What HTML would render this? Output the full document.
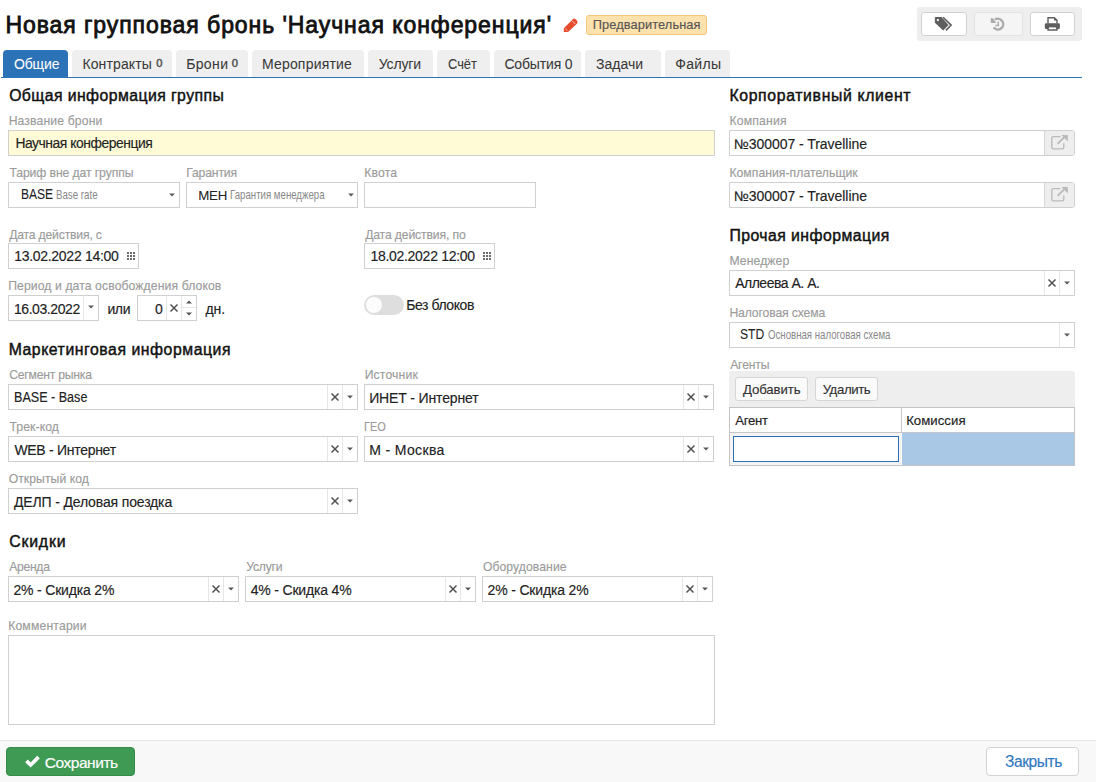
<!DOCTYPE html>
<html><head><meta charset="utf-8"><title>Групповая бронь</title>
<style>
html,body{margin:0;padding:0;background:#fff;width:1096px;height:782px;overflow:hidden;position:relative}
body{font-family:"Liberation Sans",sans-serif}
.t{position:absolute;white-space:nowrap}
.b{position:absolute;box-sizing:border-box}
</style></head><body>
<div class="t" style="left:5.40px;top:13.53px;font-size:23px;line-height:23px;color:#111;letter-spacing:0.932px;-webkit-text-stroke:0.8px #111;">Новая групповая бронь &#39;Научная конференция&#39;</div>
<svg class="b" style="left:558px;top:14px" width="26" height="22" viewBox="0 0 26 22"><path d="M5.8 18.1 V14.2 L14.6 5.4 Q16.2 3.8 17.8 5.4 L18.9 6.5 Q20.5 8.1 18.9 9.7 L10.1 18.1 Z" fill="#e64b30"/><path d="M14.1 6.8 L17.4 10.1" stroke="#fff" stroke-width="0.8" opacity="0.85"/><path d="M7.4 14.8 L9.3 16.7" stroke="#fff" stroke-width="0.9" opacity="0.8"/></svg>
<div class="b" style="left:586px;top:15px;width:121px;height:20px;background:#fde2ad;border:1px solid #f4c679;border-radius:3px"></div>
<div class="t" style="left:592.80px;top:18.76px;font-size:12.8px;line-height:12.8px;color:#555;letter-spacing:0.100px;-webkit-text-stroke:0.15px #555;">Предварительная</div>
<div class="b" style="left:917px;top:7px;width:165px;height:34px;background:#eeeeee;border-radius:3px"></div>
<div class="b" style="left:921px;top:12px;width:46px;height:23.5px;background:#fff;border:1px solid #d2d2d2;border-radius:3px"></div>
<div class="b" style="left:973.5px;top:12px;width:49.5px;height:23.5px;background:#f5f5f5;border:1px solid #e2e2e2;border-radius:3px"></div>
<div class="b" style="left:1029.5px;top:12px;width:45.5px;height:23.5px;background:#fff;border:1px solid #d2d2d2;border-radius:3px"></div>
<svg class="b" style="left:930px;top:14px" width="30" height="20" viewBox="0 0 30 20"><path d="M4.9 3.9 Q4.9 3 5.8 3 H11.6 L18.5 11.1 L13.2 16.6 L4.9 8.8 Z" fill="#5e5e5e"/><circle cx="7.9" cy="6.1" r="1.15" fill="#fff"/><path d="M13.1 3.3 L21.1 11.1 L15.9 16.4" fill="none" stroke="#5e5e5e" stroke-width="1.6"/></svg>
<svg class="b" style="left:985px;top:14px" width="30" height="20" viewBox="0 0 30 20"><path d="M9.9 5.6 A5.4 5.4 0 1 1 8.6 13.6" fill="none" stroke="#ababab" stroke-width="2.4"/><path d="M5.8 3.9 L8.4 4.6 L11.2 9 H5.8 Z" fill="#ababab"/><path d="M13.3 7.4 V11.4 H10.4" fill="none" stroke="#ababab" stroke-width="1.5"/></svg>
<svg class="b" style="left:1038px;top:14px" width="30" height="20" viewBox="0 0 30 20"><path d="M10 9.6 V3.7 H16.2 L19 6.4 V9.6" fill="none" stroke="#5e5e5e" stroke-width="1.4"/><path d="M16 3.2 V6.6 H19.4" fill="#5e5e5e"/><rect x="6.8" y="9.3" width="15.1" height="5.6" rx="1.2" fill="#5e5e5e"/><rect x="10.7" y="13.4" width="7.6" height="2" fill="#fff"/><path d="M10 12.8 V16 H19 V12.8" fill="none" stroke="#5e5e5e" stroke-width="1.4"/></svg>
<div class="b" style="left:3px;top:50px;width:64.5px;height:27px;background:#2c72b6;border-radius:4px 4px 0 0"></div>
<div class="t" style="left:13.90px;top:56.95px;font-size:14.0px;line-height:14.0px;color:#fff;letter-spacing:-0.125px;-webkit-text-stroke:0.05px #fff;">Общие</div>
<div class="b" style="left:72px;top:50px;width:99.5px;height:27px;background:#efefef;border-radius:4px 4px 0 0"></div>
<div class="t" style="left:82.40px;top:56.95px;font-size:14.0px;line-height:14.0px;color:#383838;letter-spacing:0.125px;-webkit-text-stroke:0.05px #383838;">Контракты</div>
<div class="t" style="left:156.15px;top:57.72px;font-size:11.2px;line-height:11.2px;color:#555;-webkit-text-stroke:0.5px #555;">0</div>
<div class="b" style="left:176px;top:50px;width:71.5px;height:27px;background:#efefef;border-radius:4px 4px 0 0"></div>
<div class="t" style="left:186.15px;top:56.95px;font-size:14.0px;line-height:14.0px;color:#383838;letter-spacing:0.375px;-webkit-text-stroke:0.05px #383838;">Брони</div>
<div class="t" style="left:231.65px;top:57.72px;font-size:11.2px;line-height:11.2px;color:#555;-webkit-text-stroke:0.5px #555;">0</div>
<div class="b" style="left:252px;top:50px;width:111.75px;height:27px;background:#efefef;border-radius:4px 4px 0 0"></div>
<div class="t" style="left:261.90px;top:56.95px;font-size:14.0px;line-height:14.0px;color:#383838;letter-spacing:0.200px;-webkit-text-stroke:0.05px #383838;">Мероприятие</div>
<div class="b" style="left:368.25px;top:50px;width:64.25px;height:27px;background:#efefef;border-radius:4px 4px 0 0"></div>
<div class="t" style="left:378.65px;top:56.95px;font-size:14.0px;line-height:14.0px;color:#383838;letter-spacing:-0.100px;-webkit-text-stroke:0.05px #383838;">Услуги</div>
<div class="b" style="left:437px;top:50px;width:52.5px;height:27px;background:#efefef;border-radius:4px 4px 0 0"></div>
<div class="t" style="left:447.71px;top:56.95px;font-size:14.0px;line-height:14.0px;color:#383838;transform:scaleX(0.9180);transform-origin:0 0;-webkit-text-stroke:0.05px #383838;">Счёт</div>
<div class="b" style="left:494.25px;top:50px;width:86.5px;height:27px;background:#efefef;border-radius:4px 4px 0 0"></div>
<div class="t" style="left:504.40px;top:56.95px;font-size:14.0px;line-height:14.0px;color:#383838;letter-spacing:-0.156px;-webkit-text-stroke:0.05px #383838;">События 0</div>
<div class="b" style="left:585px;top:50px;width:75.75px;height:27px;background:#efefef;border-radius:4px 4px 0 0"></div>
<div class="t" style="left:595.90px;top:56.95px;font-size:14.0px;line-height:14.0px;color:#383838;letter-spacing:0.050px;-webkit-text-stroke:0.05px #383838;">Задачи</div>
<div class="b" style="left:665px;top:50px;width:65px;height:27px;background:#efefef;border-radius:4px 4px 0 0"></div>
<div class="t" style="left:675.15px;top:56.95px;font-size:14.0px;line-height:14.0px;color:#383838;letter-spacing:0.375px;-webkit-text-stroke:0.05px #383838;">Файлы</div>
<div class="b" style="left:1px;top:77px;width:1081px;height:1px;background:#2c72b6"></div>
<div class="t" style="left:9.15px;top:87.87px;font-size:15.8px;line-height:15.8px;color:#111;letter-spacing:0.420px;-webkit-text-stroke:0.45px #111;">Общая информация группы</div>
<div class="t" style="left:8.65px;top:115.17px;font-size:12.2px;line-height:12.2px;color:#9b9b9b;letter-spacing:0.135px;-webkit-text-stroke:0.15px #9b9b9b;">Название брони</div>
<div class="b" style="left:8px;top:130px;width:707px;height:26px;border:1px solid #d0d0d0;background:#fefbd6"></div>
<div class="t" style="left:15.41px;top:136.74px;font-size:13.89px;line-height:13.89px;color:#222;letter-spacing:-0.450px;-webkit-text-stroke:0.15px #222;">Научная конференция</div>
<div class="t" style="left:9.40px;top:166.97px;font-size:12.2px;line-height:12.2px;color:#9b9b9b;letter-spacing:-0.092px;-webkit-text-stroke:0.15px #9b9b9b;">Тариф вне дат группы</div>
<div class="b" style="left:8px;top:182px;width:172px;height:26px;border:1px solid #d0d0d0;background:#fff"></div>
<div class="t" style="left:20.53px;top:188.32px;font-size:13.8px;line-height:13.8px;color:#222;transform:scaleX(0.8723);transform-origin:0 0;-webkit-text-stroke:0.05px #222;">BASE</div>
<div class="t" style="left:55.63px;top:188.63px;font-size:12.6px;line-height:12.6px;color:#888;transform:scaleX(0.7703);transform-origin:0 0;">Base rate</div>
<svg class="b" style="left:168px;top:192px" width="8" height="6" viewBox="0 0 8 6"><path d="M1.1 1.4H6.9L4 4.4Z" fill="#585858"/></svg>
<div class="t" style="left:186.15px;top:166.97px;font-size:12.2px;line-height:12.2px;color:#9b9b9b;letter-spacing:-0.143px;-webkit-text-stroke:0.15px #9b9b9b;">Гарантия</div>
<div class="b" style="left:186px;top:182px;width:172px;height:26px;border:1px solid #d0d0d0;background:#fff"></div>
<div class="t" style="left:198.15px;top:188.74px;font-size:13.3px;line-height:13.3px;color:#222;letter-spacing:-0.125px;-webkit-text-stroke:0.05px #222;">МЕН</div>
<div class="t" style="left:230.13px;top:188.63px;font-size:12.6px;line-height:12.6px;color:#888;transform:scaleX(0.7669);transform-origin:0 0;">Гарантия менеджера</div>
<svg class="b" style="left:346.5px;top:192px" width="8" height="6" viewBox="0 0 8 6"><path d="M1.1 1.4H6.9L4 4.4Z" fill="#585858"/></svg>
<div class="t" style="left:364.15px;top:166.97px;font-size:12.2px;line-height:12.2px;color:#9b9b9b;letter-spacing:0.188px;-webkit-text-stroke:0.15px #9b9b9b;">Квота</div>
<div class="b" style="left:364px;top:182px;width:172px;height:26px;border:1px solid #d0d0d0;background:#fff"></div>
<div class="t" style="left:9.15px;top:228.77px;font-size:12.2px;line-height:12.2px;color:#9b9b9b;letter-spacing:-0.183px;-webkit-text-stroke:0.15px #9b9b9b;">Дата действия, с</div>
<div class="b" style="left:8px;top:243px;width:131px;height:26px;border:1px solid #d0d0d0;background:#fff"></div>
<div class="t" style="left:14.15px;top:249.05px;font-size:14.0px;line-height:14.0px;color:#222;letter-spacing:-0.283px;-webkit-text-stroke:0.15px #222;">13.02.2022 14:00</div>
<svg class="b" style="left:127px;top:251.6px" width="8" height="8" viewBox="0 0 8 8" fill="#6a6a6a"><rect x="0" y="0" width="2" height="2"/><rect x="0" y="3" width="2" height="2"/><rect x="0" y="6" width="2" height="2"/><rect x="3" y="0" width="2" height="2"/><rect x="3" y="3" width="2" height="2"/><rect x="3" y="6" width="2" height="2"/><rect x="6" y="0" width="2" height="2"/><rect x="6" y="3" width="2" height="2"/><rect x="6" y="6" width="2" height="2"/></svg>
<div class="t" style="left:365.15px;top:228.77px;font-size:12.2px;line-height:12.2px;color:#9b9b9b;letter-spacing:-0.141px;-webkit-text-stroke:0.15px #9b9b9b;">Дата действия, по</div>
<div class="b" style="left:364px;top:243px;width:131px;height:26px;border:1px solid #d0d0d0;background:#fff"></div>
<div class="t" style="left:370.40px;top:249.05px;font-size:14.0px;line-height:14.0px;color:#222;letter-spacing:-0.283px;-webkit-text-stroke:0.15px #222;">18.02.2022 12:00</div>
<svg class="b" style="left:483px;top:251.6px" width="8" height="8" viewBox="0 0 8 8" fill="#6a6a6a"><rect x="0" y="0" width="2" height="2"/><rect x="0" y="3" width="2" height="2"/><rect x="0" y="6" width="2" height="2"/><rect x="3" y="0" width="2" height="2"/><rect x="3" y="3" width="2" height="2"/><rect x="3" y="6" width="2" height="2"/><rect x="6" y="0" width="2" height="2"/><rect x="6" y="3" width="2" height="2"/><rect x="6" y="6" width="2" height="2"/></svg>
<div class="t" style="left:8.15px;top:280.17px;font-size:12.2px;line-height:12.2px;color:#9b9b9b;letter-spacing:0.102px;-webkit-text-stroke:0.15px #9b9b9b;">Период и дата освобождения блоков</div>
<div class="b" style="left:8px;top:295px;width:91px;height:26px;border:1px solid #d0d0d0;background:#fff"></div>
<div class="t" style="left:13.90px;top:302.15px;font-size:14.0px;line-height:14.0px;color:#222;letter-spacing:-0.417px;-webkit-text-stroke:0.15px #222;">16.03.2022</div>
<div class="b" style="left:83px;top:296px;width:1px;height:24px;background:#e6e6e6"></div>
<svg class="b" style="left:86.6px;top:304px" width="8" height="6" viewBox="0 0 8 6"><path d="M1.1 1.4H6.9L4 4.4Z" fill="#585858"/></svg>
<div class="t" style="left:107.40px;top:302.15px;font-size:14.0px;line-height:14.0px;color:#222;letter-spacing:-0.375px;-webkit-text-stroke:0.15px #222;">или</div>
<div class="b" style="left:137px;top:295px;width:60px;height:26px;border:1px solid #d0d0d0;background:#fff"></div>
<div class="t" style="left:154.90px;top:302.15px;font-size:14.0px;line-height:14.0px;color:#222;-webkit-text-stroke:0.15px #222;">0</div>
<div class="b" style="left:166px;top:296px;width:1px;height:24px;background:#e6e6e6"></div>
<svg class="b" style="left:169px;top:303px" width="10" height="10" viewBox="0 0 10 10"><path d="M1.5 1.5L8.5 8.5M8.5 1.5L1.5 8.5" stroke="#505050" stroke-width="1.45"/></svg>
<div class="b" style="left:181px;top:296px;width:1px;height:24px;background:#e6e6e6"></div>
<div class="b" style="left:182px;top:307px;width:14px;height:1px;background:#e6e6e6"></div>
<svg class="b" style="left:185px;top:299px" width="8" height="18" viewBox="0 0 8 18"><path d="M1 4.5H7L4 1.5Z M1 13.5H7L4 16.5Z" fill="#555"/></svg>
<div class="t" style="left:205.40px;top:302.15px;font-size:14.0px;line-height:14.0px;color:#222;-webkit-text-stroke:0.15px #222;">дн.</div>
<div class="b" style="left:364px;top:295px;width:40px;height:20px;background:#dedede;border-radius:10px"></div>
<div class="b" style="left:366px;top:297px;width:16px;height:16px;background:#fcfcfc;border-radius:50%"></div>
<div class="t" style="left:406.15px;top:298.15px;font-size:14.0px;line-height:14.0px;color:#222;letter-spacing:-0.417px;-webkit-text-stroke:0.15px #222;">Без блоков</div>
<div class="t" style="left:8.65px;top:341.62px;font-size:15.8px;line-height:15.8px;color:#111;letter-spacing:0.543px;-webkit-text-stroke:0.45px #111;">Маркетинговая информация</div>
<div class="t" style="left:9.15px;top:368.97px;font-size:12.2px;line-height:12.2px;color:#9b9b9b;letter-spacing:-0.229px;-webkit-text-stroke:0.15px #9b9b9b;">Сегмент рынка</div>
<div class="b" style="left:8px;top:384px;width:350px;height:26px;border:1px solid #d0d0d0;background:#fff"></div>
<div class="b" style="left:342px;top:385px;width:1px;height:24px;background:#e6e6e6"></div>
<svg class="b" style="left:346px;top:394px" width="8" height="6" viewBox="0 0 8 6"><path d="M1.1 1.4H6.9L4 4.4Z" fill="#585858"/></svg>
<div class="b" style="left:327px;top:385px;width:1px;height:24px;background:#e6e6e6"></div>
<svg class="b" style="left:330px;top:392.2px" width="10" height="10" viewBox="0 0 10 10"><path d="M1.5 1.5L8.5 8.5M8.5 1.5L1.5 8.5" stroke="#505050" stroke-width="1.45"/></svg>
<div class="t" style="left:13.74px;top:391.32px;font-size:13.8px;line-height:13.8px;color:#222;transform:scaleX(0.9114);transform-origin:0 0;-webkit-text-stroke:0.15px #222;">BASE - Base</div>
<div class="t" style="left:364.65px;top:368.97px;font-size:12.2px;line-height:12.2px;color:#9b9b9b;letter-spacing:0.164px;-webkit-text-stroke:0.15px #9b9b9b;">Источник</div>
<div class="b" style="left:364px;top:384px;width:350px;height:26px;border:1px solid #d0d0d0;background:#fff"></div>
<div class="b" style="left:698px;top:385px;width:1px;height:24px;background:#e6e6e6"></div>
<svg class="b" style="left:702px;top:394px" width="8" height="6" viewBox="0 0 8 6"><path d="M1.1 1.4H6.9L4 4.4Z" fill="#585858"/></svg>
<div class="b" style="left:683px;top:385px;width:1px;height:24px;background:#e6e6e6"></div>
<svg class="b" style="left:686px;top:392.2px" width="10" height="10" viewBox="0 0 10 10"><path d="M1.5 1.5L8.5 8.5M8.5 1.5L1.5 8.5" stroke="#505050" stroke-width="1.45"/></svg>
<div class="t" style="left:369.15px;top:391.15px;font-size:14.0px;line-height:14.0px;color:#222;letter-spacing:-0.146px;-webkit-text-stroke:0.15px #222;">ИНЕТ - Интернет</div>
<div class="t" style="left:9.40px;top:421.17px;font-size:12.2px;line-height:12.2px;color:#9b9b9b;letter-spacing:0.107px;-webkit-text-stroke:0.15px #9b9b9b;">Трек-код</div>
<div class="b" style="left:8px;top:436px;width:350px;height:26px;border:1px solid #d0d0d0;background:#fff"></div>
<div class="b" style="left:342px;top:437px;width:1px;height:24px;background:#e6e6e6"></div>
<svg class="b" style="left:346px;top:446px" width="8" height="6" viewBox="0 0 8 6"><path d="M1.1 1.4H6.9L4 4.4Z" fill="#585858"/></svg>
<div class="b" style="left:327px;top:437px;width:1px;height:24px;background:#e6e6e6"></div>
<svg class="b" style="left:330px;top:444.2px" width="10" height="10" viewBox="0 0 10 10"><path d="M1.5 1.5L8.5 8.5M8.5 1.5L1.5 8.5" stroke="#505050" stroke-width="1.45"/></svg>
<div class="t" style="left:14.40px;top:443.15px;font-size:14.0px;line-height:14.0px;color:#222;letter-spacing:-0.288px;-webkit-text-stroke:0.15px #222;">WEB - Интернет</div>
<div class="t" style="left:364.19px;top:421.17px;font-size:12.2px;line-height:12.2px;color:#9b9b9b;transform:scaleX(0.9055);transform-origin:0 0;-webkit-text-stroke:0.15px #9b9b9b;">ГЕО</div>
<div class="b" style="left:364px;top:436px;width:350px;height:26px;border:1px solid #d0d0d0;background:#fff"></div>
<div class="b" style="left:698px;top:437px;width:1px;height:24px;background:#e6e6e6"></div>
<svg class="b" style="left:702px;top:446px" width="8" height="6" viewBox="0 0 8 6"><path d="M1.1 1.4H6.9L4 4.4Z" fill="#585858"/></svg>
<div class="b" style="left:683px;top:437px;width:1px;height:24px;background:#e6e6e6"></div>
<svg class="b" style="left:686px;top:444.2px" width="10" height="10" viewBox="0 0 10 10"><path d="M1.5 1.5L8.5 8.5M8.5 1.5L1.5 8.5" stroke="#505050" stroke-width="1.45"/></svg>
<div class="t" style="left:369.15px;top:443.15px;font-size:14.0px;line-height:14.0px;color:#222;letter-spacing:0.372px;-webkit-text-stroke:0.15px #222;">М - Москва</div>
<div class="t" style="left:8.65px;top:473.17px;font-size:12.2px;line-height:12.2px;color:#9b9b9b;letter-spacing:0.068px;-webkit-text-stroke:0.15px #9b9b9b;">Открытый код</div>
<div class="b" style="left:8px;top:488px;width:350px;height:26px;border:1px solid #d0d0d0;background:#fff"></div>
<div class="b" style="left:342px;top:489px;width:1px;height:24px;background:#e6e6e6"></div>
<svg class="b" style="left:346px;top:498px" width="8" height="6" viewBox="0 0 8 6"><path d="M1.1 1.4H6.9L4 4.4Z" fill="#585858"/></svg>
<div class="b" style="left:327px;top:489px;width:1px;height:24px;background:#e6e6e6"></div>
<svg class="b" style="left:330px;top:496.2px" width="10" height="10" viewBox="0 0 10 10"><path d="M1.5 1.5L8.5 8.5M8.5 1.5L1.5 8.5" stroke="#505050" stroke-width="1.45"/></svg>
<div class="t" style="left:13.90px;top:495.15px;font-size:14.0px;line-height:14.0px;color:#222;letter-spacing:-0.143px;-webkit-text-stroke:0.15px #222;">ДЕЛП - Деловая поездка</div>
<div class="t" style="left:9.15px;top:534.12px;font-size:15.8px;line-height:15.8px;color:#111;letter-spacing:0.850px;-webkit-text-stroke:0.45px #111;">Скидки</div>
<div class="t" style="left:9.15px;top:560.67px;font-size:12.2px;line-height:12.2px;color:#9b9b9b;letter-spacing:-0.300px;-webkit-text-stroke:0.15px #9b9b9b;">Аренда</div>
<div class="b" style="left:8px;top:576px;width:231px;height:26px;border:1px solid #d0d0d0;background:#fff"></div>
<div class="b" style="left:223px;top:577px;width:1px;height:24px;background:#e6e6e6"></div>
<svg class="b" style="left:227px;top:586px" width="8" height="6" viewBox="0 0 8 6"><path d="M1.1 1.4H6.9L4 4.4Z" fill="#585858"/></svg>
<div class="b" style="left:208px;top:577px;width:1px;height:24px;background:#e6e6e6"></div>
<svg class="b" style="left:211px;top:584.2px" width="10" height="10" viewBox="0 0 10 10"><path d="M1.5 1.5L8.5 8.5M8.5 1.5L1.5 8.5" stroke="#505050" stroke-width="1.45"/></svg>
<div class="t" style="left:13.40px;top:583.15px;font-size:14.0px;line-height:14.0px;color:#222;letter-spacing:-0.173px;-webkit-text-stroke:0.15px #222;">2% - Скидка 2%</div>
<div class="t" style="left:246.25px;top:560.67px;font-size:12.2px;line-height:12.2px;color:#9b9b9b;letter-spacing:-0.220px;-webkit-text-stroke:0.15px #9b9b9b;">Услуги</div>
<div class="b" style="left:245px;top:576px;width:231px;height:26px;border:1px solid #d0d0d0;background:#fff"></div>
<div class="b" style="left:460px;top:577px;width:1px;height:24px;background:#e6e6e6"></div>
<svg class="b" style="left:464px;top:586px" width="8" height="6" viewBox="0 0 8 6"><path d="M1.1 1.4H6.9L4 4.4Z" fill="#585858"/></svg>
<div class="b" style="left:445px;top:577px;width:1px;height:24px;background:#e6e6e6"></div>
<svg class="b" style="left:448px;top:584.2px" width="10" height="10" viewBox="0 0 10 10"><path d="M1.5 1.5L8.5 8.5M8.5 1.5L1.5 8.5" stroke="#505050" stroke-width="1.45"/></svg>
<div class="t" style="left:250.65px;top:583.15px;font-size:14.0px;line-height:14.0px;color:#222;letter-spacing:-0.169px;-webkit-text-stroke:0.15px #222;">4% - Скидка 4%</div>
<div class="t" style="left:482.90px;top:560.67px;font-size:12.2px;line-height:12.2px;color:#9b9b9b;letter-spacing:0.073px;-webkit-text-stroke:0.15px #9b9b9b;">Оборудование</div>
<div class="b" style="left:482px;top:576px;width:231px;height:26px;border:1px solid #d0d0d0;background:#fff"></div>
<div class="b" style="left:697px;top:577px;width:1px;height:24px;background:#e6e6e6"></div>
<svg class="b" style="left:701px;top:586px" width="8" height="6" viewBox="0 0 8 6"><path d="M1.1 1.4H6.9L4 4.4Z" fill="#585858"/></svg>
<div class="b" style="left:682px;top:577px;width:1px;height:24px;background:#e6e6e6"></div>
<svg class="b" style="left:685px;top:584.2px" width="10" height="10" viewBox="0 0 10 10"><path d="M1.5 1.5L8.5 8.5M8.5 1.5L1.5 8.5" stroke="#505050" stroke-width="1.45"/></svg>
<div class="t" style="left:487.60px;top:583.15px;font-size:14.0px;line-height:14.0px;color:#222;letter-spacing:-0.173px;-webkit-text-stroke:0.15px #222;">2% - Скидка 2%</div>
<div class="t" style="left:8.15px;top:619.67px;font-size:12.2px;line-height:12.2px;color:#9b9b9b;letter-spacing:0.175px;-webkit-text-stroke:0.15px #9b9b9b;">Комментарии</div>
<div class="b" style="left:8px;top:635px;width:707px;height:90px;border:1px solid #d0d0d0;background:#fff"></div>
<div class="t" style="left:729.40px;top:87.87px;font-size:15.8px;line-height:15.8px;color:#111;letter-spacing:0.645px;-webkit-text-stroke:0.45px #111;">Корпоративный клиент</div>
<div class="t" style="left:729.40px;top:115.17px;font-size:12.2px;line-height:12.2px;color:#9b9b9b;letter-spacing:0.214px;-webkit-text-stroke:0.15px #9b9b9b;">Компания</div>
<div class="b" style="left:729px;top:130px;width:346px;height:26px;border:1px solid #d0d0d0;background:#fff;border-radius:0 3px 3px 0"></div>
<div class="b" style="left:1044px;top:131px;width:30px;height:24px;background:#eeeeee;border-left:1px solid #d6d6d6;border-radius:0 2px 2px 0"></div>
<div class="t" style="left:733.90px;top:137.15px;font-size:14.0px;line-height:14.0px;color:#222;letter-spacing:-0.053px;-webkit-text-stroke:0.15px #222;">№300007 - Travelline</div>
<svg class="b" style="left:1040px;top:125px" width="40" height="35" viewBox="0 0 40 35"><path d="M20.4 11.6 H13.3 Q11.8 11.6 11.8 13.1 V22.3 Q11.8 23.8 13.3 23.8 H22.3 Q23.8 23.8 23.8 22.3 V18.3" fill="none" stroke="#bababa" stroke-width="1.35"/><path d="M17.6 18.9 L24.6 11.9" stroke="#bababa" stroke-width="1.8"/><path d="M21.4 10 H27.8 V16.4 Z" fill="#bababa"/></svg>
<div class="t" style="left:729.40px;top:166.97px;font-size:12.2px;line-height:12.2px;color:#9b9b9b;letter-spacing:0.042px;-webkit-text-stroke:0.15px #9b9b9b;">Компания-плательщик</div>
<div class="b" style="left:729px;top:182px;width:346px;height:26px;border:1px solid #d0d0d0;background:#fff;border-radius:0 3px 3px 0"></div>
<div class="b" style="left:1044px;top:183px;width:30px;height:24px;background:#eeeeee;border-left:1px solid #d6d6d6;border-radius:0 2px 2px 0"></div>
<div class="t" style="left:733.90px;top:189.15px;font-size:14.0px;line-height:14.0px;color:#222;letter-spacing:-0.053px;-webkit-text-stroke:0.15px #222;">№300007 - Travelline</div>
<svg class="b" style="left:1040px;top:177px" width="40" height="35" viewBox="0 0 40 35"><path d="M20.4 11.6 H13.3 Q11.8 11.6 11.8 13.1 V22.3 Q11.8 23.8 13.3 23.8 H22.3 Q23.8 23.8 23.8 22.3 V18.3" fill="none" stroke="#bababa" stroke-width="1.35"/><path d="M17.6 18.9 L24.6 11.9" stroke="#bababa" stroke-width="1.8"/><path d="M21.4 10 H27.8 V16.4 Z" fill="#bababa"/></svg>
<div class="t" style="left:729.40px;top:227.87px;font-size:15.8px;line-height:15.8px;color:#111;letter-spacing:0.453px;-webkit-text-stroke:0.45px #111;">Прочая информация</div>
<div class="t" style="left:729.40px;top:255.17px;font-size:12.2px;line-height:12.2px;color:#9b9b9b;letter-spacing:0.107px;-webkit-text-stroke:0.15px #9b9b9b;">Менеджер</div>
<div class="b" style="left:729px;top:270px;width:346px;height:26px;border:1px solid #d0d0d0;background:#fff"></div>
<div class="b" style="left:1059px;top:271px;width:1px;height:24px;background:#e6e6e6"></div>
<svg class="b" style="left:1063px;top:280px" width="8" height="6" viewBox="0 0 8 6"><path d="M1.1 1.4H6.9L4 4.4Z" fill="#585858"/></svg>
<div class="b" style="left:1044px;top:271px;width:1px;height:24px;background:#e6e6e6"></div>
<svg class="b" style="left:1047px;top:278.2px" width="10" height="10" viewBox="0 0 10 10"><path d="M1.5 1.5L8.5 8.5M8.5 1.5L1.5 8.5" stroke="#505050" stroke-width="1.45"/></svg>
<div class="t" style="left:735.15px;top:277.49px;font-size:13.95px;line-height:13.95px;color:#222;letter-spacing:-0.450px;-webkit-text-stroke:0.15px #222;">Аллеева А. А.</div>
<div class="t" style="left:729.40px;top:307.17px;font-size:12.2px;line-height:12.2px;color:#9b9b9b;letter-spacing:-0.125px;-webkit-text-stroke:0.15px #9b9b9b;">Налоговая схема</div>
<div class="b" style="left:729px;top:322px;width:346px;height:26px;border:1px solid #d0d0d0;background:#fff"></div>
<div class="b" style="left:1059px;top:323px;width:1px;height:24px;background:#e6e6e6"></div>
<svg class="b" style="left:1063px;top:332px" width="8" height="6" viewBox="0 0 8 6"><path d="M1.1 1.4H6.9L4 4.4Z" fill="#585858"/></svg>
<div class="t" style="left:739.71px;top:328.32px;font-size:13.8px;line-height:13.8px;color:#222;transform:scaleX(0.8774);transform-origin:0 0;-webkit-text-stroke:0.05px #222;">STD</div>
<div class="t" style="left:768.02px;top:328.63px;font-size:12.6px;line-height:12.6px;color:#888;transform:scaleX(0.7661);transform-origin:0 0;">Основная налоговая схема</div>
<div class="t" style="left:730.15px;top:358.87px;font-size:12.2px;line-height:12.2px;color:#9b9b9b;letter-spacing:-0.150px;-webkit-text-stroke:0.15px #9b9b9b;">Агенты</div>
<div class="b" style="left:729px;top:371px;width:346px;height:36px;background:#eeeeee;border-radius:3px 3px 0 0"></div>
<div class="b" style="left:734.5px;top:376.75px;width:73.0px;height:24.5px;background:#fafafa;border:1px solid #d6d6d6;border-radius:3px"></div>
<div class="t" style="left:742.90px;top:382.82px;font-size:13.2px;line-height:13.2px;color:#333;letter-spacing:-0.071px;-webkit-text-stroke:0.15px #333;">Добавить</div>
<div class="b" style="left:814.5px;top:376.75px;width:63.0px;height:24.5px;background:#fafafa;border:1px solid #d6d6d6;border-radius:3px"></div>
<div class="t" style="left:822.65px;top:382.82px;font-size:13.2px;line-height:13.2px;color:#333;letter-spacing:-0.375px;-webkit-text-stroke:0.15px #333;">Удалить</div>
<div class="b" style="left:729px;top:407px;width:346px;height:59px;border:1px solid #c4c4c4;background:#fff"></div>
<div class="b" style="left:730px;top:432px;width:344px;height:1px;background:#c8c8c8"></div>
<div class="b" style="left:901px;top:408px;width:1px;height:24px;background:#c8c8c8"></div>
<div class="t" style="left:735.15px;top:413.82px;font-size:13.2px;line-height:13.2px;color:#222;letter-spacing:-0.250px;-webkit-text-stroke:0.15px #222;">Агент</div>
<div class="t" style="left:906.15px;top:413.82px;font-size:13.2px;line-height:13.2px;color:#222;letter-spacing:0.036px;-webkit-text-stroke:0.15px #222;">Комиссия</div>
<div class="b" style="left:730px;top:433px;width:171px;height:32px;background:#f5f4f2"></div>
<div class="b" style="left:902px;top:433px;width:172px;height:32px;background:#a9c8e5"></div>
<div class="b" style="left:733px;top:436px;width:165.79999999999995px;height:26px;border:1.5px solid #2a71b8;background:#fff"></div>
<div class="b" style="left:0px;top:740px;width:1096px;height:42px;background:#f8f8f8;border-top:1px solid #e6e6e6"></div>
<div class="b" style="left:6px;top:747px;width:129px;height:29px;background:#3f9b54;border:1px solid #358a48;border-radius:4px"></div>
<svg class="b" style="left:24px;top:754.5px" width="17" height="14" viewBox="0 0 17 14"><path d="M1.2 7.2 L3.8 4.6 L6.6 7.4 L13.2 0.8 L15.8 3.4 L6.6 12.6 Z" fill="#fff"/></svg>
<div class="t" style="left:44.65px;top:754.56px;font-size:15.52px;line-height:15.52px;color:#fff;letter-spacing:-0.450px;-webkit-text-stroke:0.15px #fff;">Сохранить</div>
<div class="b" style="left:986px;top:747px;width:93px;height:29px;background:#fff;border:1px solid #d3d3d3;border-radius:4px"></div>
<div class="t" style="left:1005.00px;top:754.49px;font-size:15.6px;line-height:15.6px;color:#2f78c0;letter-spacing:-0.450px;-webkit-text-stroke:0.15px #2f78c0;">Закрыть</div>
</body></html>
